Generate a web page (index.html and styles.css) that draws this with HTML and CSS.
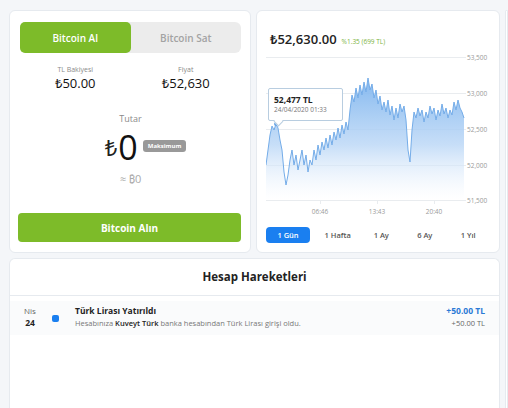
FILE: index.html
```html
<!DOCTYPE html>
<html lang="tr">
<head>
    <meta charset="UTF-8">
    <meta name="viewport" content="width=device-width, initial-scale=1.0">
    <title>Bitcoin Al / Sat</title>
    <link rel="stylesheet" href="styles.css">
</head>
<body>
    <div class="layout">
        <!-- Alış / satış kartı -->
        <div class="card trade">
            <div class="toggle">
                <div class="toggle-item active">Bitcoin Al</div>
                <div class="toggle-item">Bitcoin Sat</div>
            </div>
            <div class="stats">
                <div class="stat">
                    <span class="stat-label">TL Bakiyesi</span>
                    <span class="stat-value">₺50.00</span>
                </div>
                <div class="stat">
                    <span class="stat-label">Fiyat</span>
                    <span class="stat-value">₺52,630</span>
                </div>
            </div>
            <div class="amount">
                <span class="amount-label">Tutar</span>
                <div class="amount-row">
                    <span class="amount-cur">₺</span>
                    <span class="amount-value">0</span>
                    <span class="max-badge">Maksimum</span>
                </div>
                <span class="amount-btc">≈ ₿0</span>
            </div>
            <button class="buy-btn">Bitcoin Alın</button>
        </div>

        <!-- Grafik kartı -->
        <div class="card chart-card">
            <div class="price-head">
                <span class="price">₺52,630.00</span>
                <span class="change">%1.35 (699 TL)</span>
            </div>
            <div class="chart">
                <svg width="228" height="166" viewBox="0 0 228 166">
                    <defs>
                        <linearGradient id="fill" x1="0" y1="0" x2="0" y2="1">
                            <stop offset="0" stop-color="#7db4ee" stop-opacity="0.95"/>
                            <stop offset="0.55" stop-color="#b9d6f6" stop-opacity="0.8"/>
                            <stop offset="1" stop-color="#ffffff" stop-opacity="0.3"/>
                        </linearGradient>
                    </defs>
                    <g class="grid">
                        <line x1="0" y1="7.5" x2="200" y2="7.5"/>
                        <line x1="0" y1="43.5" x2="200" y2="43.5"/>
                        <line x1="0" y1="79.5" x2="200" y2="79.5"/>
                        <line x1="0" y1="115.5" x2="200" y2="115.5"/>
                        <line x1="0" y1="150.5" x2="200" y2="150.5"/>
                        <line x1="54.5" y1="150" x2="54.5" y2="154"/>
                        <line x1="111.5" y1="150" x2="111.5" y2="154"/>
                        <line x1="168.5" y1="150" x2="168.5" y2="154"/>
                    </g>
                    <path class="area" d="M0,115 L2,100 4,85 6,76 8,80 10,74 12,78 14,90 16,100 18,122 20,135 22,125 24,110 26,100 28,115 30,105 32,120 34,110 36,100 38,115 40,105 42,122 44,110 46,115 48,100 50,110 52,95 54,105 56,92 58,100 60,88 62,98 64,85 66,95 68,82 70,90 72,78 74,88 76,75 78,84 80,72 82,80 84,60 86,45 88,52 90,38 92,48 94,35 96,45 98,32 100,42 102,28 104,40 106,34 108,48 110,40 112,54 114,46 116,60 118,52 120,62 122,50 124,65 126,56 128,70 130,58 132,68 134,54 136,62 138,56 140,70 142,100 144,112 146,80 148,62 150,68 152,58 154,66 156,60 158,72 160,62 162,68 164,56 166,64 168,58 170,70 172,60 174,66 176,54 178,64 180,58 182,68 184,60 186,65 188,52 190,60 192,50 194,58 196,62 198,68 L198,150 L0,150 Z"/>
                    <path class="line" d="M0,115 L2,100 4,85 6,76 8,80 10,74 12,78 14,90 16,100 18,122 20,135 22,125 24,110 26,100 28,115 30,105 32,120 34,110 36,100 38,115 40,105 42,122 44,110 46,115 48,100 50,110 52,95 54,105 56,92 58,100 60,88 62,98 64,85 66,95 68,82 70,90 72,78 74,88 76,75 78,84 80,72 82,80 84,60 86,45 88,52 90,38 92,48 94,35 96,45 98,32 100,42 102,28 104,40 106,34 108,48 110,40 112,54 114,46 116,60 118,52 120,62 122,50 124,65 126,56 128,70 130,58 132,68 134,54 136,62 138,56 140,70 142,100 144,112 146,80 148,62 150,68 152,58 154,66 156,60 158,72 160,62 162,68 164,56 166,64 168,58 170,70 172,60 174,66 176,54 178,64 180,58 182,68 184,60 186,65 188,52 190,60 192,50 194,58 196,62 198,68"/>
                    <circle class="dot" cx="10" cy="74" r="2"/>
                    <g class="axis">
                        <text x="201" y="10">53,500</text>
                        <text x="201" y="46">53,000</text>
                        <text x="201" y="82">52,500</text>
                        <text x="201" y="118">52,000</text>
                        <text x="201" y="153">51,500</text>
                        <text x="54" y="164" text-anchor="middle">06:46</text>
                        <text x="111" y="164" text-anchor="middle">13:43</text>
                        <text x="168" y="164" text-anchor="middle">20:40</text>
                    </g>
                </svg>
                <div class="tooltip">
                    <strong>52,477 TL</strong>
                    <span>24/04/2020 01:33</span>
                </div>
            </div>
            <div class="ranges">
                <span class="range active">1 Gün</span>
                <span class="range">1 Hafta</span>
                <span class="range">1 Ay</span>
                <span class="range">6 Ay</span>
                <span class="range">1 Yıl</span>
            </div>
        </div>

        <!-- Sağdaki kart (kısmen görünüyor) -->
        <div class="card side"></div>

        <!-- Hesap hareketleri -->
        <div class="card history">
            <h3 class="history-title">Hesap Hareketleri</h3>
            <div class="tx">
                <div class="tx-date">
                    <span>Nis</span>
                    <strong>24</strong>
                </div>
                <span class="tx-icon"></span>
                <div class="tx-body">
                    <strong>Türk Lirası Yatırıldı</strong>
                    <span>Hesabınıza <b>Kuveyt Türk</b> banka hesabından Türk Lirası girişi oldu.</span>
                </div>
                <div class="tx-amount">
                    <strong>+50.00 TL</strong>
                    <span>+50.00 TL</span>
                </div>
            </div>
        </div>
    </div>
</body>
</html>
```

FILE: styles.css
```css
body {
    margin: 0;
    height: 408px;
    background-color: #f4f6f9;
    color: #222;
    font-family: "Open Sans", "Noto Sans", sans-serif;
    overflow: hidden;
}

.layout {
    display: grid;
    grid-template-columns: 242px 244px 1fr;
    grid-template-rows: 243px 150px;
    column-gap: 5px;
    row-gap: 5px;
    padding: 10px 0 0 9px;
}

.card {
    background: #fff;
    border: 1px solid #e6eaef;
    border-radius: 6px;
    box-sizing: border-box;
    overflow: hidden;
}

/* Alış kartı */
.trade {
    padding: 11px 8px 10px 10px;
    display: flex;
    flex-direction: column;
}

.toggle {
    display: flex;
    background: #ececec;
    border-radius: 6px;
    height: 31px;
    width: 221px;
}

.toggle-item {
    flex: 1;
    display: flex;
    align-items: center;
    justify-content: center;
    font-size: 10px;
    font-weight: 600;
    color: #a3a3a3;
    border-radius: 5px;
}

.toggle-item.active {
    background: #7dbb29;
    color: #fff;
}

.stats {
    display: flex;
    margin-top: 12px;
    width: 221px;
}

.stat {
    flex: 1;
    display: flex;
    flex-direction: column;
    align-items: center;
}

.stat-label {
    font-size: 7px;
    color: #8a8a8a;
    line-height: 10px;
}

.stat-value {
    font-size: 13px;
    color: #111;
    line-height: 17px;
}

.amount {
    display: flex;
    flex-direction: column;
    align-items: center;
    width: 221px;
    margin-top: 21px;
}

.amount-label {
    font-size: 9px;
    color: #8a8a8a;
    line-height: 12px;
}

.amount-row {
    display: flex;
    align-items: center;
    margin-top: 7px;
    height: 30px;
    padding-left: 30px;
}

.amount-cur {
    font-size: 22px;
    color: #222;
    line-height: 30px;
}

.amount-value {
    font-size: 34px;
    color: #111;
    line-height: 30px;
    margin-left: 1px;
}

.max-badge {
    background: #999;
    color: #fff;
    font-size: 6px;
    font-weight: 700;
    border-radius: 3px;
    padding: 2px 5px;
    margin-left: 5px;
    margin-top: -2px;
}

.amount-btc {
    font-size: 11px;
    color: #aaa;
    margin-top: 9px;
}

.buy-btn {
    margin-top: auto;
    margin-left: -2px;
    width: 223px;
    height: 29px;
    border: none;
    border-radius: 4px;
    background: #7dbb29;
    color: #fff;
    font-family: inherit;
    font-size: 10px;
    font-weight: 700;
}

/* Grafik kartı */
.chart-card {
    padding: 19px 9px 0 9px;
}

.price-head {
    display: flex;
    align-items: baseline;
    gap: 5px;
    padding-left: 4px;
    height: 16px;
}

.price {
    font-size: 13px;
    font-weight: 600;
    color: #222;
}

.change {
    font-size: 6.5px;
    color: #7cb342;
}

.chart {
    position: relative;
    margin-top: 4px;
    height: 166px;
}

.chart svg {
    display: block;
}

.grid line {
    stroke: #e9ecef;
    stroke-width: 1;
}

.area {
    fill: url(#fill);
}

.line {
    fill: none;
    stroke: #74ace8;
    stroke-width: 1;
}

.dot {
    fill: #6ea8e6;
}

.axis text {
    font-size: 6.5px;
    fill: #9a9a9a;
}

.tooltip {
    position: absolute;
    left: 2px;
    top: 38px;
    width: 68px;
    padding: 5px 0 5px 5px;
    background: rgba(255, 255, 255, 0.95);
    border: 1px solid #b8cde0;
    border-radius: 2px;
    display: flex;
    flex-direction: column;
}

.tooltip::after {
    content: "";
    position: absolute;
    left: 6px;
    bottom: -5px;
    width: 6px;
    height: 6px;
    background: #fff;
    border-right: 1px solid #b8cde0;
    border-bottom: 1px solid #b8cde0;
    transform: rotate(45deg);
}

.tooltip strong {
    font-size: 8.5px;
    color: #222;
    line-height: 11px;
}

.tooltip span {
    font-size: 6.5px;
    color: #777;
    line-height: 10px;
}

.ranges {
    display: flex;
    align-items: center;
    margin-top: 11px;
}

.range {
    font-size: 7.5px;
    font-weight: 600;
    color: #555;
    text-align: center;
    flex: 1;
}

.range.active {
    flex: 0 0 44px;
    background: #1a7ff0;
    color: #fff;
    border-radius: 4px;
    line-height: 16px;
    margin-right: 6px;
}

/* Sağ kart */
.side {
    grid-row: 1 / 3;
    grid-column: 3;
    border-bottom: none;
    border-radius: 6px 6px 0 0;
}

/* Hesap hareketleri */
.history {
    grid-column: 1 / 3;
    border-bottom: none;
    border-radius: 6px 6px 0 0;
}

.history-title {
    margin: 0;
    text-align: center;
    font-size: 11.5px;
    font-weight: 700;
    color: #222;
    line-height: 36px;
    border-bottom: 1px solid #e6eaef;
}

.tx {
    display: flex;
    align-items: center;
    margin-top: 5px;
    padding: 4px 14px 6px 13px;
    background: #fafbfc;
}

.tx-date {
    display: flex;
    flex-direction: column;
    align-items: center;
    width: 14px;
    line-height: 12px;
}

.tx-date span {
    font-size: 8px;
    color: #666;
}

.tx-date strong {
    font-size: 8.5px;
    color: #222;
}

.tx-icon {
    width: 7px;
    height: 7px;
    border-radius: 2px;
    background: #1a7ff0;
    margin-left: 15px;
    margin-top: 2px;
}

.tx-body {
    display: flex;
    flex-direction: column;
    margin-left: 16px;
    flex: 1;
    line-height: 12px;
}

.tx-body strong {
    font-size: 8.5px;
    color: #222;
}

.tx-body span {
    font-size: 7.5px;
    color: #777;
}

.tx-body b {
    font-weight: 600;
    color: #222;
}

.tx-amount {
    display: flex;
    flex-direction: column;
    align-items: flex-end;
    line-height: 12px;
}

.tx-amount strong {
    font-size: 8.5px;
    color: #2a7ad6;
}

.tx-amount span {
    font-size: 7.5px;
    color: #666;
}
```
